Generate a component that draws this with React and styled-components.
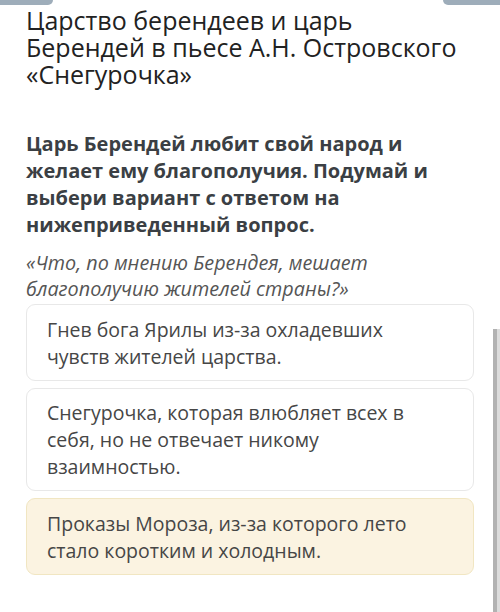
import React from "react";
import styled, { createGlobalStyle } from "styled-components";

const Global = createGlobalStyle`
  html, body { margin: 0; padding: 0; background: #ffffff; }
  body { font-family: "Open Sans", "Noto Sans", sans-serif; }
`;

const Page = styled.div`
  position: relative;
  width: 500px;
  height: 612px;
  overflow: hidden;
  background: #ffffff;
`;

const TopBar = styled.div`
  display: flex;
  justify-content: space-between;
  height: 5px;
`;

const Tab = styled.div`
  width: ${(p) => p.$w}px;
  height: 5px;
  background: #9eadba;
  border-bottom-left-radius: ${(p) => (p.$side === "right" ? 8 : 0)}px;
  border-bottom-right-radius: ${(p) => (p.$side === "left" ? 8 : 0)}px;
`;

const Content = styled.div`
  padding: 0 26px;
  display: flex;
  flex-direction: column;
`;

const Title = styled.h1`
  margin: 2px 14px 0 0;
  font-weight: 400;
  font-size: 25px;
  line-height: 27px;
  color: #222222;
`;

const Question = styled.p`
  margin: 42px 0 0;
  font-weight: 700;
  font-size: 20px;
  line-height: 27px;
  color: #3b3f44;
`;

const Quote = styled.p`
  margin: 12px 0 0;
  font-style: italic;
  font-size: 19.8px;
  line-height: 26px;
  color: #555555;
`;

const Options = styled.div`
  margin-top: 2px;
  display: flex;
  flex-direction: column;
  gap: 7px;
`;

const Option = styled.div`
  border: 1.5px solid ${(p) => (p.$selected ? "#f1e6c2" : "#e8e8e8")};
  background: ${(p) => (p.$selected ? "#fbf3e1" : "#ffffff")};
  border-radius: 9px;
  padding: 10.5px 28px 10px 20px;
  font-size: 19.5px;
  line-height: 27px;
  color: #464646;
`;

const Scrollbar = styled.div`
  position: absolute;
  right: 0;
  top: 329px;
  bottom: 0;
  width: 7px;
  background: linear-gradient(to right, #b2b2b2 0 4px, #dcdcdc 4px 100%);
`;

export default function App() {
  return (
    <Page>
      <Global />
      <TopBar>
        <Tab $w={53} $side="left" />
        <Tab $w={57} $side="right" />
      </TopBar>
      <Content>
        <Title>
          Царство берендеев и царь Берендей в пьесе А.Н. Островского «Снегурочка»
        </Title>
        <Question>
          Царь Берендей любит свой народ и желает ему благополучия. Подумай и
          выбери вариант с ответом на нижеприведенный вопрос.
        </Question>
        <Quote>«Что, по мнению Берендея, мешает благополучию жителей страны?»</Quote>
        <Options>
          <Option>Гнев бога Ярилы из-за охладевших чувств жителей царства.</Option>
          <Option>
            Снегурочка, которая влюбляет всех в себя, но не отвечает никому
            взаимностью.
          </Option>
          <Option $selected>
            Проказы Мороза, из-за которого лето стало коротким и холодным.
          </Option>
        </Options>
      </Content>
      <Scrollbar />
    </Page>
  );
}
